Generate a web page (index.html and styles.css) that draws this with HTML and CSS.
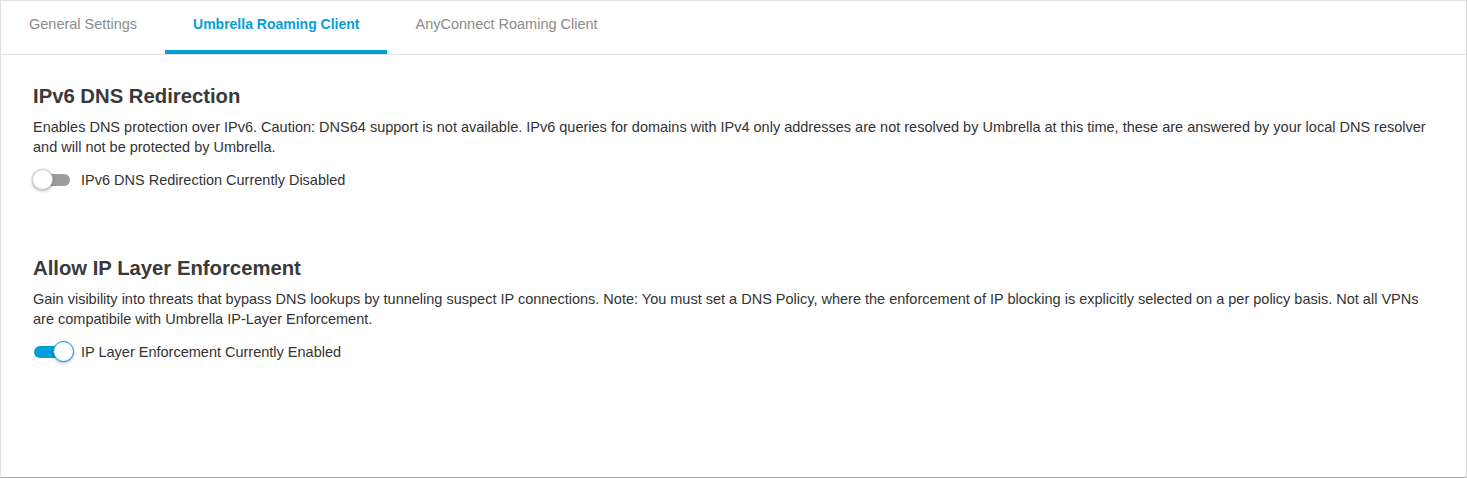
FILE: index.html
```html
<!DOCTYPE html>
<html>

<head lang="en">
    <meta charset="UTF-8">
    <title>Roaming Client Settings</title>
    <link rel="stylesheet" href="styles.css">
</head>

<body>
    <div class="panel">
        <ul class="tabs">
            <li class="tab">General Settings</li>
            <li class="tab active">Umbrella Roaming Client</li>
            <li class="tab">AnyConnect Roaming Client</li>
        </ul>

        <div class="content">
            <div class="section">
                <h2>IPv6 DNS Redirection</h2>
                <p>Enables DNS protection over IPv6. Caution: DNS64 support is not available. IPv6 queries for domains with IPv4 only addresses are not resolved by Umbrella at this time, these are answered by your local DNS resolver and will not be protected by Umbrella.</p>
                <label class="switch-row">
                    <span class="switch"><span class="knob"></span></span>
                    <span class="switch-label">IPv6 DNS Redirection Currently Disabled</span>
                </label>
            </div>

            <div class="section">
                <h2>Allow IP Layer Enforcement</h2>
                <p>Gain visibility into threats that bypass DNS lookups by tunneling suspect IP connections. Note: You must set a DNS Policy, where the enforcement of IP blocking is explicitly selected on a per policy basis. Not all VPNs are compatibile with Umbrella IP-Layer Enforcement.</p>
                <label class="switch-row">
                    <span class="switch on"><span class="knob"></span></span>
                    <span class="switch-label">IP Layer Enforcement Currently Enabled</span>
                </label>
            </div>
        </div>
    </div>
</body>

</html>
```

FILE: styles.css
```css
/* reset */
body,
h2,
p,
ul,
li {
    margin: 0;
    padding: 0;
}

ul {
    list-style: none;
}

body {
    font: 14.5px/20px "Liberation Sans", Arial, sans-serif;
    color: #333;
    background: #fff;
}

.panel {
    height: 478px;
    box-sizing: border-box;
    border: 1px solid #e1e1e1;
    border-right-color: #d4d4d4;
    border-bottom-color: #ababab;
}

/* tabs */
.tabs {
    display: flex;
    border-bottom: 1px solid #e1e1e1;
}

.tab {
    padding: 13px 28px 16px;
    border-bottom: 4px solid transparent;
    color: #8b8b8b;
}

.tab.active {
    font-size: 14px;
    color: #049fd9;
    font-weight: bold;
    border-bottom-color: #049fd9;
}

/* content */
.content {
    padding: 29px 28px 0 32px;
}

.section {
    padding-bottom: 65px;
}

.section h2 {
    font-size: 20.3px;
    line-height: 24px;
    font-weight: bold;
    color: #39393b;
    margin-bottom: 9px;
}

.section p {
    color: #333;
    margin-bottom: 12px;
}

.switch-row {
    display: flex;
    align-items: center;
    height: 22px;
    gap: 7px;
}

.switch {
    position: relative;
    width: 42px;
    height: 22px;
    margin-left: -1px;
}

.switch::before {
    content: "";
    position: absolute;
    left: 2px;
    width: 36px;
    top: 5px;
    height: 12px;
    border-radius: 6px;
    background: #9c9c9c;
}

.switch.on::before {
    background: #049fd9;
}

/* knob sits over the track */
.knob {
    position: absolute;
    top: 0;
    left: 0;
    width: 21px;
    height: 21px;
    box-sizing: border-box;
    border-radius: 50%;
    background: #fff;
    border: 1px solid #c8c8c8;
    box-shadow: 0 1px 3px rgba(0, 0, 0, 0.35);
}

.switch.on .knob {
    left: 21px;
    border: 1.5px solid #049fd9;
}

.switch-label {
    color: #333;
}
```
